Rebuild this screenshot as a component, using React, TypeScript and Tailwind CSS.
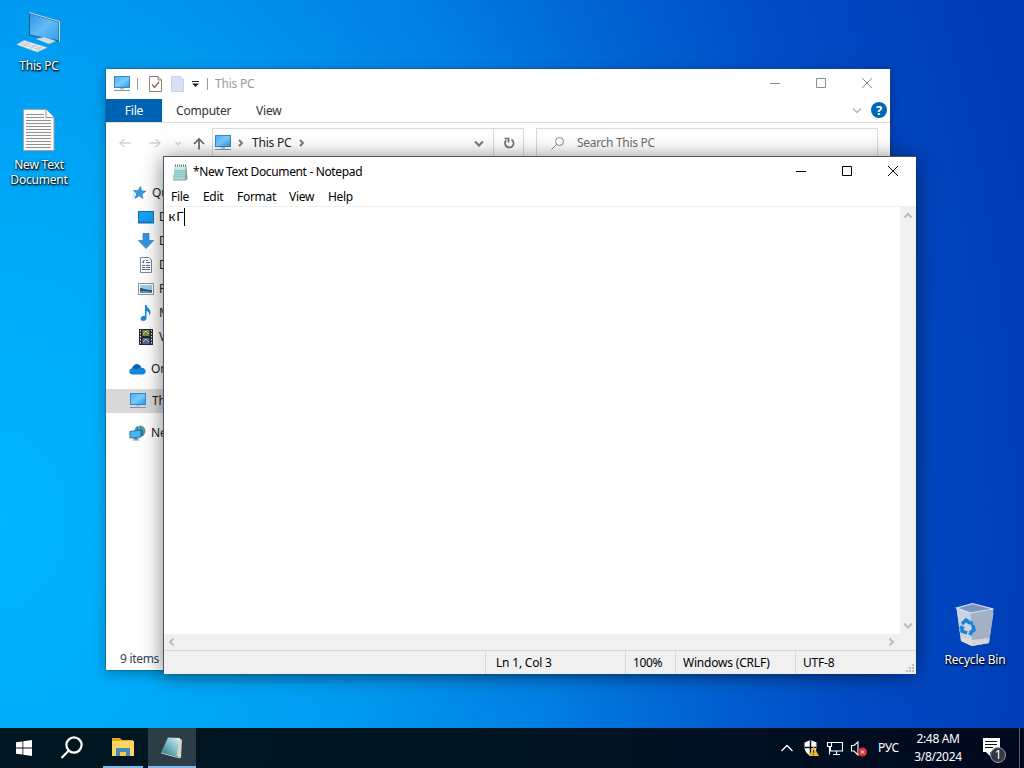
import type { ReactNode } from "react";

const NAV_ITEMS = [
  { label: "Desktop",   icon: <DesktopIcon /> },
  { label: "Downloads", icon: <DownloadIcon /> },
  { label: "Documents", icon: <DocumentIcon /> },
  { label: "Pictures",  icon: <PictureIcon /> },
  { label: "Music",     icon: <MusicIcon /> },
  { label: "Videos",    icon: <VideoIcon /> },
];

const MENU = [
  { label: "File",   width: "w-8" },
  { label: "Edit",   width: "w-[34px]" },
  { label: "Format", width: "w-[52px]" },
  { label: "View",   width: "w-[39px]" },
  { label: "Help",   width: "w-10" },
];

function PcIcon() {
  return (
    <svg width="18" height="16" viewBox="0 0 18 16" className="shrink-0">
      <defs>
        <linearGradient id="screen" x1="0" y1="0" x2="1" y2="1">
          <stop offset="0" stopColor="#45b0f5" />
          <stop offset=".5" stopColor="#7accff" />
          <stop offset="1" stopColor="#2298ea" />
        </linearGradient>
      </defs>
      <rect x="1.5" y=".5" width="15" height="11" fill="url(#screen)" stroke="#3f86b8" />
      <path d="M7 12h4v1.5H7z" fill="#a8bccb" />
      <path d="M1 14.5h16" stroke="#7898b0" />
    </svg>
  );
}

function DesktopIcon() {
  return (
    <svg width="16" height="16" viewBox="0 0 16 16" className="shrink-0">
      <rect x=".5" y="2.5" width="15" height="11.5" fill="#18a0f4" stroke="#1273b4" />
      <path d="M1 13h14" stroke="#0a4f82" strokeDasharray="1 1" />
    </svg>
  );
}

function DownloadIcon() {
  return (
    <svg width="16" height="16" viewBox="0 0 16 16" className="shrink-0">
      <path d="M5 .5h6v7h4.500L8 15.500.5 7.500H5z" fill="#3495e0" stroke="#2a7cc0" strokeWidth=".7" />
    </svg>
  );
}

function DocumentIcon() {
  return (
    <svg width="16" height="16" viewBox="0 0 16 16" fill="none" className="shrink-0">
      <path d="M2.500.5H11L13.500 3v12.500h-11z" fill="#fff" stroke="#7d8790" />
      <path d="M8 3.500h2M5 5.500h1M8 5.500h4M4 8.500h3M8 8.500h4M4 10.500h3M8 10.500h4M4 12.500h8" stroke="#467599" />
      <path d="M4.500 5.500 6.500 3" stroke="#2a3f50" />
    </svg>
  );
}

function PictureIcon() {
  return (
    <svg width="16" height="16" viewBox="0 0 16 16" className="shrink-0">
      <rect x=".5" y="2.5" width="15" height="11" fill="#fff" stroke="#8b98a3" />
      <path d="M2 4h12v8H2z" fill="#9bcdf0" />
      <path d="M2 7c3 0 5 2 12 2v3H2z" fill="#2d5473" />
      <path d="M2 10.500c4-1 8 0 12 .5v1H2z" fill="#7290a3" />
    </svg>
  );
}

function MusicIcon() {
  return (
    <svg width="16" height="16" viewBox="0 0 16 16" className="shrink-0">
      <path d="M7 0h1.500c.2 3 4.500 4 4 7.500-.2 1.500-.8 2.500-1.500 3 .8-3-1-4-2.500-4.500V13c0 1.800-1.500 3-3.300 3S2.500 15 2.700 13.500C3 11.500 5.200 10.500 7 11z" fill="#168bd8" />
    </svg>
  );
}

function VideoIcon() {
  return (
    <svg width="16" height="16" viewBox="0 0 16 16" className="shrink-0">
      <path d="M1 0h14v16H1z" fill="#27282d" />
      <path d="M4.500 1h7v6h-7z" fill="#7b8b53" />
      <path d="M4.500 9h7v6h-7z" fill="#5265a5" />
      <path d="m5 5 3-3 3 3M5 13l3-3 3 3" stroke="#c9cf73" fill="none" />
      <path d="M2.500 1v15M13.500 1v15" stroke="#dfe3e8" strokeDasharray="1.500 1.500" />
    </svg>
  );
}

function StarIcon() {
  return (
    <svg width="16" height="16" viewBox="0 0 16 16" className="shrink-0">
      <path d="m9.500 1.500.9 4.200 4.400.6-3.800 2.600.8 4.600-3.500-2.700-4.300 2.500 1.800-4.500L2.500 5.500l4.500.2z" fill="#3a9be3" stroke="#2073b3" strokeWidth=".7" />
      <path d="M1 11.500 4 10M1 14l3-2M1.500 8.500l3-.5" stroke="#8fc2e8" strokeWidth=".7" />
    </svg>
  );
}

function CloudIcon() {
  return (
    <svg width="17" height="16" viewBox="0 0 17 16" className="shrink-0">
      <path d="M4 13.500C1.500 13.500.3 12 .3 10.400c0-1.700 1.200-3 2.900-3.200C4 5 5.700 3.200 7.800 3.200c2.100 0 3.700 1.400 4.400 3.500 2.500-.1 4.500 1.400 4.500 3.600 0 1.900-1.300 3.200-3.100 3.200z" fill="#1686d9" />
      <path d="M3 7.200c1.600-.2 2.900.3 4 1l3-1.200c.8-.3 1.500-.4 2.200-.3-.7-2.100-2.300-3.500-4.400-3.500C5.700 3.200 4 5 3 7.200z" fill="#0862b0" />
    </svg>
  );
}

function NetworkIcon() {
  return (
    <svg width="17" height="16" viewBox="0 0 17 16" className="shrink-0">
      <circle cx="11" cy="6" r="5.500" fill="#4a9ca8" />
      <path d="M8 2c3-1 3 2 5 3s-1 4 2 5c-2 2-5 1-6-1z" fill="#2a6c98" />
      <path d="M10 1c-1 2 1 2 0 4" stroke="#b6dbc2" fill="none" />
      <path d="m1 6.500 11-1.500v7L1 13z" fill="#49b9f3" stroke="#276f9f" />
      <path d="M5 13h4v1H5zM3.500 15h7" stroke="#6e95ae" />
    </svg>
  );
}

function NotepadIcon() {
  return (
    <svg width="17" height="17" viewBox="0 0 17 17">
      <path d="M3 2h11.500l1 13-1.500 1.500H1z" fill="#8da3a5" />
      <path d="M3 2h10.500l-1 13.500H1z" fill="#a3d8d5" />
      <path d="M3 2h10.500l-.3 4H2.600z" fill="#c3e9e5" />
      <path d="M2.500 6.500h10.500M2.300 8.500h10.500M2 10.500h10.500M1.800 12.500h10.500" stroke="#84bcbf" strokeWidth=".7" />
      <path d="M3 1.500h11.500" stroke="#5a6d6f" strokeWidth="2" strokeDasharray="1 1" />
    </svg>
  );
}

type ChevronProps = { d: string; color?: string; stroke?: number };

function Chevron({ d, color = "#777", stroke = 2 }: ChevronProps) {
  return (
    <svg width="10" height="10" viewBox="0 0 10 10" fill="none" className="shrink-0">
      <path d={d} stroke={color} strokeWidth={stroke} />
    </svg>
  );
}

const LEFT = "M6.500 1.500 3 5l3.500 3.500";
const RIGHT = "M3.500 1.500 7 5 3.500 8.500";
const SMALL_RIGHT = "M3 2 6 5 3 8";
const UP = "M1.500 6.500 5 3l3.500 3.500";
const DOWN = "M1 3.500 5 7.500 9 3.500";

function WindowControls({ color }: { color: string }) {
  return (
    <div className="ml-auto flex h-[30px]">
      {["M0 5.500h10", "M.5.5h9v9h-9z", "m0 0 10 10m0-10L0 10"].map((d) => (
        <button key={d} className="flex w-[46px] items-start justify-center pt-[9px]">
          <svg width="10" height="10" viewBox="0 0 10 10" fill="none">
            <path d={d} stroke={color} />
          </svg>
        </button>
      ))}
    </div>
  );
}

function NavRow({ icon, label, className = "" }: { icon: ReactNode; label: string; className?: string }) {
  return (
    <div className={`flex h-6 items-center gap-[5px] whitespace-nowrap ${className}`}>
      {icon}
      <span className="min-w-0 flex-1 overflow-hidden">{label}</span>
    </div>
  );
}

function Explorer() {
  return (
    <section className="absolute left-[106px] top-[69px] flex h-[601px] w-[784px] flex-col overflow-hidden bg-white shadow-[0_0_0_1px_rgba(30,70,110,0.4),0_3px_12px_rgba(0,0,0,0.3)]">
      <header className="flex h-[30px] shrink-0 items-center">
        <div className="ml-[7px] flex w-[102px] shrink-0 items-center">
          <PcIcon />
          <i className="ml-1.5 h-3 w-px shrink-0 bg-[#999]" />
          <svg width="13" height="16" viewBox="0 0 13 16" fill="none" className="ml-[11px] shrink-0">
            <path d="M.5.500h8.500l3.500 3.500v11.500H.5z" fill="#fff" stroke="#8b7d76" />
            <path d="M9 .5V4h3.500" stroke="#8b7d76" />
            <path d="m3 8.500 2.500 3L10 6" stroke="#a0604c" strokeWidth="1.400" />
          </svg>
          <svg width="13" height="16" viewBox="0 0 13 16" className="ml-[9px] shrink-0">
            <path d="M.5.5h9l3 3v12H.5z" fill="#d5e0f2" stroke="#c6d3e8" />
            <path d="M9.500.5v3h3" fill="#eef3fb" stroke="#c6d3e8" />
          </svg>
          <svg width="7" height="6" viewBox="0 0 7 6" className="ml-2 shrink-0">
            <path d="M0 0h7v1H0zM0 2.500h7L3.500 6z" fill="#222" />
          </svg>
          <i className="ml-2 h-3 w-px shrink-0 bg-[#999]" />
        </div>
        <span className="text-[#999]">This PC</span>
        <WindowControls color="#8d8d8d" />
      </header>

      <nav className="flex h-6 shrink-0 items-center border-b border-[#dcdcdc] text-[#333]">
        <span className="flex h-full w-14 items-center justify-center bg-[#0063b1] text-white">File</span>
        <span className="ml-[14px] w-20 tracking-[-0.2px]">Computer</span>
        <span>View</span>
        <div className="ml-auto mr-[3px] flex items-center gap-[9px] pb-px">
          <Chevron d={DOWN} color="#b8b8b8" stroke={1.5} />
          <span className="flex size-4 items-center justify-center rounded-full bg-[#0067b8] text-[13px] font-bold leading-none text-white">?</span>
        </div>
      </nav>

      <div className="flex h-[35px] shrink-0 items-start pt-[5px]">
        <div className="flex h-[30px] w-[106px] items-center">
          <svg width="106" height="14" viewBox="0 0 106 14" fill="none">
            <path d="M14 7h11M18.500 3l-4.500 4 4.500 4M43 7h11M49.500 3 54 7l-4.500 4M69.500 6l2.500 2.500L74.500 6" stroke="#d2d2d2" strokeWidth="1.300" />
            <path d="M93 13.500V3M88 8l5-5 5 5" stroke="#666" strokeWidth="1.700" />
          </svg>
        </div>
        <div className="flex h-[32px] w-[312px] border border-[#d9d9d9]">
          <div className="flex h-7 flex-1 items-center pl-[1px]">
            <PcIcon />
            <span className="ml-1 mr-1.5 flex"><Chevron d={SMALL_RIGHT} stroke={1.8} /></span>
            <span className="w-[45px] text-[#222]">This PC</span>
            <Chevron d={SMALL_RIGHT} stroke={1.8} />
            <span className="ml-auto mr-[9px] flex"><Chevron d={DOWN} /></span>
          </div>
          <div className="flex h-7 w-[30px] items-center justify-center border-l border-[#d9d9d9]">
            <svg width="12" height="12" viewBox="0 0 12 12" fill="none">
              <path d="M8.500 2.500A4.300 4.300 0 1 1 3.200 3.200M1.500 1.500h4v4" stroke="#707070" strokeWidth="1.700" />
            </svg>
          </div>
        </div>
        <div className="ml-3 flex h-[32px] w-[342px] items-start border border-[#d9d9d9]">
          <div className="flex h-7 items-center gap-[12px] pl-[14px] text-[#6d6d6d]">
            <svg width="14" height="13" viewBox="0 0 14 13" fill="none" stroke="#888">
              <circle cx="8.500" cy="4.500" r="4" />
              <path d="m5.500 7.500-5 5" />
            </svg>
            <span className="tracking-[-0.3px]">Search This PC</span>
          </div>
        </div>
      </div>

      {/* only the strip left of the Notepad window shows */}
      <aside className="mt-[23px] w-[57px] text-[#222]">
        <NavRow icon={<StarIcon />} label="Quick access" className="gap-[3px] pl-[25px]" />
        {NAV_ITEMS.map(({ label, icon }) => (
          <NavRow key={label} icon={icon} label={label} className="pl-8" />
        ))}
        <NavRow icon={<CloudIcon />} label="OneDrive" className="mt-2 pl-[23px]" />
        <NavRow icon={<PcIcon />} label="This PC" className="mt-2 gap-[3px] bg-[#d9d9d9] pl-[23px]" />
        <NavRow icon={<NetworkIcon />} label="Network" className="mt-2 pl-[23px]" />
      </aside>

      <footer className="mb-[2px] mt-auto pl-[14px] tracking-[-0.3px] text-[#35465c]">9 items</footer>
    </section>
  );
}

function Notepad() {
  return (
    <section className="absolute left-[163px] top-[156px] flex h-[517px] w-[753px] flex-col border border-r-0 border-[#4a5560] bg-white text-black shadow-[0_2px_20px_rgba(0,0,0,0.5)]">
      <header className="flex h-[30px] shrink-0 items-center">
        <span className="ml-2 flex w-[21px]"><NotepadIcon /></span>
        <span className="whitespace-nowrap tracking-[-0.35px]">*New Text Document - Notepad</span>
        <WindowControls color="#000" />
      </header>
      <nav className="flex h-5 shrink-0 items-center border-b border-[#f0f0f0] pl-[7px]">
        {MENU.map(({ label, width }) => (
          <span key={label} className={`shrink-0 tracking-[-0.3px] ${width}`}>{label}</span>
        ))}
      </nav>
      <div className="flex h-[427px] shrink-0">
        <div className="flex flex-1 items-start pl-1 pt-px">
          <span className="w-4 font-['Liberation_Mono'] text-[13.33px] leading-[19px] tracking-normal">кГ</span>
          <i className="h-[18px] w-px bg-black" />
        </div>
        <div className="flex w-4 flex-col items-center justify-between bg-[#f0f0f0] py-1">
          <Chevron d={UP} color="#bcbcbc" />
          <Chevron d={DOWN} color="#bcbcbc" />
        </div>
      </div>
      <div className="flex h-4 shrink-0 items-center justify-between bg-[#f0f0f0] pl-[3px] pr-5">
        <Chevron d={LEFT} color="#bcbcbc" />
        <Chevron d={RIGHT} color="#bcbcbc" />
      </div>
      <footer className="flex flex-1 border-t border-[#d7d7d7] bg-[#f0f0f0] leading-[23px]">
        <span className="w-[321px]" />
        <span className="w-[140px] border-l border-[#d7d7d7] pl-2.5">Ln 1, Col 3</span>
        <span className="w-[50px] border-l border-[#d7d7d7] pl-[7px] tracking-[-0.4px]">100%</span>
        <span className="w-[120px] whitespace-nowrap border-l border-[#d7d7d7] pl-[7px]">Windows (CRLF)</span>
        <span className="flex-1 border-l border-[#d7d7d7] pl-[7px]">UTF-8</span>
        <svg width="11" height="11" viewBox="0 0 11 11" className="self-end">
          <path d="M7 1h2v2H7zM4 4h2v2H4zM7 4h2v2H7zM1 7h2v2H1zM4 7h2v2H4zM7 7h2v2H7z" fill="#bdbdbd" />
        </svg>
      </footer>
    </section>
  );
}

function DesktopShortcut({ label, icon, className }: { label: string; icon: ReactNode; className: string }) {
  return (
    <div className={`absolute flex w-[76px] flex-col items-center text-center leading-[15px] text-white [text-shadow:0_1px_2px_#000,1px_1px_2px_#000] ${className}`}>
      {icon}
      <span>{label}</span>
    </div>
  );
}

function BigPcIcon() {
  return (
    <svg width="46" height="48" viewBox="0 0 46 48" className="-mb-[1px]">
      <defs>
        <linearGradient id="bigScreen" x1="0" y1="0" x2="1" y2="1">
          <stop offset="0" stopColor="#2795e5" />
          <stop offset=".5" stopColor="#65bbf6" />
          <stop offset="1" stopColor="#2c9df0" />
        </linearGradient>
      </defs>
      <path d="m13.500 2 29.500 9v19l-29.500-6z" fill="url(#bigScreen)" stroke="#23608e" />
      <path d="m13 1.500 30.500 9V30.500" fill="none" stroke="#c9d7e0" />
      <path d="m27 27 7 1.500v4l-7-2z" fill="#b4c3cd" />
      <path d="m20 28 8-2 12 4-7 3z" fill="#d0dbe2" />
      <path d="m8 29.500 23 7-10 4.500-20-7.500z" fill="#edf1f4" stroke="#bac6ce" strokeWidth=".7" />
      <path d="m6 31 20 6.500M4 32.500l20 6.500M14 31l-7 4.500M21 33l-7 5M27 35l-8 5" stroke="#aab6bf" strokeWidth=".7" />
    </svg>
  );
}

function TextFileIcon() {
  return (
    <svg width="34" height="44" viewBox="0 0 34 44" fill="none">
      <path d="M1.500 1.500H24l8 8v33H1.500z" fill="#fafafa" stroke="#a6a49d" />
      <path d="M24 1.500v8h8" fill="#fff" stroke="#99958e" />
      <path d="M4 6.500h18M4 9.500h18M4 12.500h25M4 15.500h25M4 18.500h25M4 21.500h25M4 24.500h25M4 27.500h25M4 30.500h25M4 33.500h25M4 36.500h25M4 39.500h25" stroke="#8e9196" />
    </svg>
  );
}

function RecycleIcon() {
  return (
    <svg width="40" height="46" viewBox="0 0 40 46">
      <path d="m1.500 6 14 5h23L34 41l-17 3-11-5z" fill="#bac5d7" fillOpacity=".9" />
      <path d="m15.500 11 23-3.500L34 41l-17 3z" fill="#a3b0c5" />
      <path d="m1.500 6 14 5L17 44 6 39z" fill="#cbd3e0" />
      <path d="m6 35 11 3 17-2v5L17 44l-11-5z" fill="#e0dfdc" fillOpacity=".8" />
      <path d="m1.500 6 16-4.500L38.500 7l-23 4z" fill="#7b95c2" stroke="#e2e9f2" strokeWidth="1.200" />
      <g fill="none" stroke="#1683d7" strokeWidth="3.500">
        <path d="m7 22 4-4 4 3" />
        <path d="m18 23 1 5-4 3" />
        <path d="m12 31-5-2v-4" />
      </g>
      <path d="m12 21 6-2v5zM17 28l-4 4 4 2zM4 27l2-4 4 3z" fill="#1683d7" />
    </svg>
  );
}

function Taskbar() {
  return (
    <footer className="absolute inset-x-0 bottom-0 flex h-10 bg-linear-to-r from-[#001721] via-[#011421] to-[#01091f] text-white">
      <button className="flex w-12 items-center justify-center">
        <svg width="16" height="16" viewBox="0 0 16 16" fill="#fff">
          <path d="m0 2.300 6.500-.9v6.200H0zM7.300 1.300 16 0v7.600H7.300zM0 8.400h6.500v6.200L0 13.700zM7.300 8.400H16V16l-8.700-1.300z" />
        </svg>
      </button>
      <button className="flex w-12 items-center justify-center">
        <svg width="24" height="24" viewBox="0 0 24 24" fill="none" stroke="#fff" strokeWidth="2.200">
          <circle cx="14" cy="9" r="7.600" />
          <path d="M8.800 14.500 1.500 22" />
        </svg>
      </button>
      <button className="ml-[7px] flex w-10 items-center justify-center border-b-2 border-[#7fb8ea]">
        <svg width="22" height="19" viewBox="0 0 22 19">
          <path d="M0 0h8l2 2h11v4H0z" fill="#e5a51d" />
          <path d="M0 3h22v15H0z" fill="#fbd566" />
          <path d="M4 18v-8h14v8h-4v-4H8v4z" fill="#4589b7" />
          <path d="M8 14h6v4H8z" fill="#f5c94f" />
        </svg>
      </button>
      <button className="ml-[5px] flex w-12 items-center justify-center border-b-2 border-[#7fb8ea] bg-[#2c3d46]">
        <svg width="24" height="23" viewBox="0 0 24 23">
          <defs>
            <linearGradient id="pad" x1="1" y1="0" x2="0" y2="1">
              <stop offset="0" stopColor="#dcf3f5" />
              <stop offset=".5" stopColor="#75b7c3" />
              <stop offset="1" stopColor="#2b7284" />
            </linearGradient>
          </defs>
          <path d="m19 2 3 2-1 18-5-2z" fill="#d5d6c8" />
          <path d="m8 1.500 12 .5-4 18.500-15-4z" fill="url(#pad)" />
          <path d="m1 17 15 4 4 1" stroke="#c3cbc8" fill="none" />
        </svg>
      </button>

      <div className="ml-auto flex items-center">
        <svg width="92" height="20" viewBox="0 0 92 20" fill="none">
          <path d="m2.500 13 5.500-5.500 5.500 5.500" stroke="#fff" strokeWidth="1.300" />
          <path d="m31.500 2 6 2.500V9c0 4-2.500 7-6 9-3.500-2-6-5-6-9V4.500z" fill="#fff" />
          <path d="M31.500 2v15M25.500 9.500h12" stroke="#01101f" strokeWidth="1.500" />
          <path d="m34.500 8.500 5.500 9.500h-10z" fill="#f1b52d" />
          <path d="M34.500 12v3m0 1v1" stroke="#473300" />
          <path d="M53 4.500h10.500v8.500H51.500V9M57.500 13v4M54 16.500h7M48.500 4.500h4v4h-4zM50.500 8.500v8" stroke="#fff" strokeWidth="1.100" />
          <path d="M72.500 7.500H75L79 4v13l-4-4h-2.500z" stroke="#fff" strokeWidth="1.100" />
          <circle cx="83.500" cy="14" r="4.500" fill="#d92f38" />
          <path d="m81.800 12.300 3.400 3.400m0-3.400-3.400 3.400" stroke="#fff" />
        </svg>
        <span className="ml-[7px] w-[23px] whitespace-nowrap tracking-[-0.2px]">РУС</span>
        <div className="ml-[12px] mr-px flex w-[50px] flex-col items-center whitespace-nowrap leading-[18px] tracking-[-0.35px]">
          <span>2:48 AM</span>
          <span>3/8/2024</span>
        </div>
        <div className="relative mr-px ml-[17px] size-6">
          <svg width="24" height="22" viewBox="0 0 24 22">
            <path d="M2 2h17v14H9v4l-4-4H2z" fill="#fff" />
            <path d="M4 5.500h12M4 8.500h12M4 11.500h8" stroke="#01101f" />
          </svg>
          <span className="absolute left-[9px] top-[11px] flex size-4 items-center justify-center rounded-full border border-[#9a9fa5] bg-[#343a42] text-[12px]">1</span>
        </div>
        <i className="ml-[13px] mr-[4px] h-10 w-px bg-[#56606e]" />
      </div>
    </footer>
  );
}

export default function App() {
  return (
    <main className="relative h-[768px] w-[1024px] overflow-hidden bg-[radial-gradient(ellipse_1100px_1500px_at_0px_520px,#00b4ff_0%,#00a9f8_20%,#0099f0_35%,#007fe4_51%,#0066d4_63%,#004ec8_76%,#003bb6_96%)] font-['Noto_Sans','Open_Sans',sans-serif] text-[12px] tracking-[-0.2px]">
      <DesktopShortcut label="This PC" icon={<BigPcIcon />} className="left-[1px] top-[11px]" />
      <DesktopShortcut label="New Text Document" icon={<TextFileIcon />} className="left-[1px] top-[108px] gap-[5px]" />
      <DesktopShortcut label="Recycle Bin" icon={<RecycleIcon />} className="left-[937px] top-[602px] gap-[4px]" />
      <Explorer />
      <Notepad />
      <Taskbar />
    </main>
  );
}
